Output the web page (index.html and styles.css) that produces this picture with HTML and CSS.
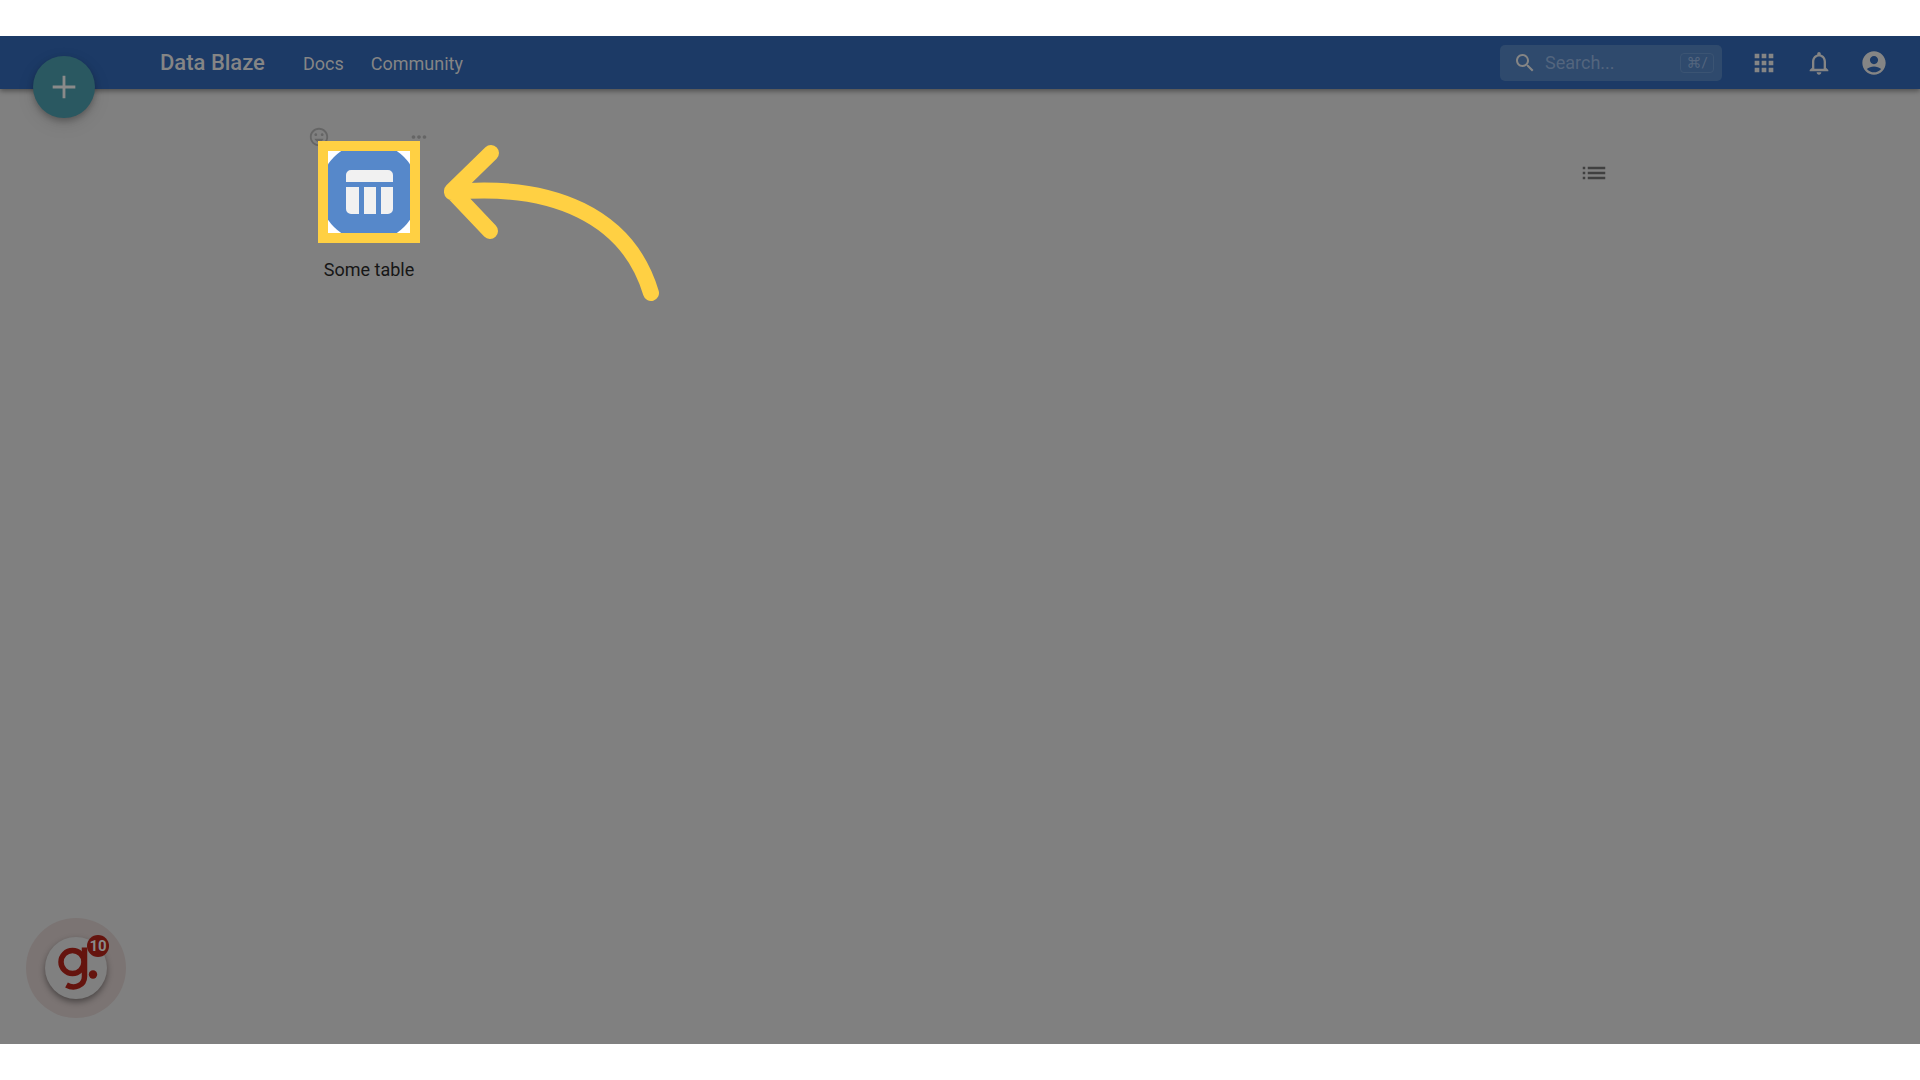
FILE: index.html
```
<!DOCTYPE html>
<html lang="en">
<head>
  <meta charset="UTF-8" />
  <meta name="viewport" content="width=device-width, initial-scale=1.0" />
  <title>Data Blaze</title>
  <link rel="stylesheet" href="styles.css">
</head>
<body>
  <div class="app">
    <header class="topbar">
      <a class="brand" href="#">Data Blaze</a>
      <nav class="nav">
        <a href="#">Docs</a>
        <a href="#">Community</a>
      </nav>
      <label class="search">
        <svg width="24" height="24" viewBox="0 0 24 24"><path d="M15.5 14h-.79l-.28-.27C15.41 12.59 16 11.11 16 9.5 16 5.91 13.09 3 9.5 3S3 5.91 3 9.5 5.91 16 9.5 16c1.61 0 3.09-.59 4.23-1.57l.27.28v.79l5 4.99L20.49 19l-4.99-5zm-6 0C7.01 14 5 11.99 5 9.5S7.01 5 9.5 5 14 7.01 14 9.5 11.99 14 9.5 14z"/></svg>
        <input type="text" placeholder="Search..." aria-label="Search" />
        <kbd>⌘/</kbd>
      </label>
      <div class="actions">
        <button aria-label="Apps">
          <svg viewBox="0 0 24 24"><path d="M4 8h4V4H4v4zm6 12h4v-4h-4v4zm-6 0h4v-4H4v4zm0-6h4v-4H4v4zm6 0h4v-4h-4v4zm6-10v4h4V4h-4zm-6 4h4V4h-4v4zm6 6h4v-4h-4v4zm0 6h4v-4h-4v4z"/></svg>
        </button>
        <button aria-label="Notifications">
          <svg viewBox="0 0 24 24"><path d="M12 22c1.1 0 2-.9 2-2h-4c0 1.1.9 2 2 2zm6-6v-5c0-3.07-1.63-5.64-4.5-6.32V4c0-.83-.67-1.5-1.5-1.5s-1.5.67-1.5 1.5v.68C7.64 5.36 6 7.92 6 11v5l-2 2v1h16v-1l-2-2zm-2 1H8v-6c0-2.48 1.51-4.5 4-4.5s4 2.02 4 4.5v6z"/></svg>
        </button>
        <button aria-label="Account">
          <svg viewBox="0 0 24 24"><path d="M12 2C6.48 2 2 6.48 2 12s4.48 10 10 10 10-4.48 10-10S17.52 2 12 2zm0 4c1.93 0 3.5 1.57 3.5 3.5S13.93 13 12 13s-3.5-1.57-3.5-3.5S10.07 6 12 6zm0 14c-2.03 0-4.43-.82-6.14-2.88C7.55 15.8 9.68 15 12 15s4.45.8 6.14 2.12C16.43 19.18 14.03 20 12 20z"/></svg>
        </button>
      </div>
    </header>

    <button class="fab" aria-label="Add">
      <svg width="34" height="34" viewBox="0 0 24 24"><path d="M20 13h-7v7h-2v-7H4v-2h7V4h2v7h7z"/></svg>
    </button>

    <main class="content">
      <div class="tile">
        <div class="tile-tools">
          <button aria-label="Pick icon">
            <svg viewBox="0 0 24 24"><path d="M11.99 2C6.47 2 2 6.48 2 12s4.47 10 9.99 10C17.52 22 22 17.52 22 12S17.52 2 11.99 2zM12 20c-4.42 0-8-3.58-8-8s3.58-8 8-8 8 3.58 8 8-3.58 8-8 8zm3.5-9c.83 0 1.5-.67 1.5-1.5S16.33 8 15.5 8 14 8.67 14 9.5s.67 1.5 1.5 1.5zm-7 0c.83 0 1.5-.67 1.5-1.5S9.33 8 8.5 8 7 8.67 7 9.5 7.67 11 8.5 11zM7 14c.8 2.05 2.7 3.5 5 3.5s4.2-1.45 5-3.5z"/></svg>
          </button>
          <button aria-label="More">
            <svg viewBox="0 0 24 24"><path d="M6 10c-1.1 0-2 .9-2 2s.9 2 2 2 2-.9 2-2-.9-2-2-2zm12 0c-1.1 0-2 .9-2 2s.9 2 2 2 2-.9 2-2-.9-2-2-2zm-6 0c-1.1 0-2 .9-2 2s.9 2 2 2 2-.9 2-2-.9-2-2-2z"/></svg>
          </button>
        </div>
        <a class="tile-link" href="#">
          <span class="highlight">
            <svg width="82" height="82" viewBox="0 0 82 82">
              <circle cx="41" cy="41" r="49.5" fill="#5688ca"/>
              <path fill="#f1f1f1" d="M18 31v-7a5 5 0 0 1 5-5h37a5 5 0 0 1 5 5v7zM18 36h13v27h-8a5 5 0 0 1-5-5zM36 36h12v27H36zM53 36h12v22a5 5 0 0 1-5 5h-7z"/>
            </svg>
          </span>
          <span class="tile-name">Some table</span>
        </a>
        <svg class="arrow" width="230" height="170" viewBox="0 0 230 170">
          <path d="M59 21 20 59l38 40M20 60c101-9 176 24 199 101"/>
        </svg>
      </div>
      <button class="view-toggle" aria-label="List view">
        <svg width="30" height="30" viewBox="0 0 24 24"><path d="M3 13h2v-2H3v2zm0 4h2v-2H3v2zm0-8h2V7H3v2zm4 4h14v-2H7v2zm0 4h14v-2H7v2zM7 7v2h14V7H7z"/></svg>
      </button>
    </main>

    <button class="guide" aria-label="Guides">
      <svg width="62" height="62" viewBox="0 0 62 62">
        <g fill="none" stroke="#65140e" stroke-width="5.5">
          <circle cx="27.5" cy="25" r="11.5"/>
          <path d="M39.5 10.5v29c0 9-10 13-18 8.5"/>
        </g>
        <circle cx="48" cy="37.5" r="4.2" fill="#65140e"/>
      </svg>
      <span class="badge">10</span>
    </button>
  </div>
</body>
</html>
```
FILE: styles.css
```
body {
  margin: 0;
  padding: 36px 0;
  background: #fff;
  font-family: Roboto, sans-serif;
  font-size: 18px;
}

button {
  padding: 0;
  border: none;
  background: none;
  color: inherit;
  font-family: inherit;
  cursor: pointer;
}

a {
  color: inherit;
  text-decoration: none;
}

svg {
  display: block;
  fill: currentColor;
}

.app {
  position: relative;
  min-height: calc(100vh - 72px);
  background: #808080;
  overflow: hidden;
}

.topbar {
  display: flex;
  align-items: center;
  height: 53px;
  padding: 0 32px 0 160px;
  background: #1c3a66;
  color: #858585;
  box-shadow: 0 2px 5px rgba(0, 0, 0, 0.4);
}

.brand {
  font-size: 22px;
  font-weight: 500;
}

.nav {
  display: flex;
  gap: 27px;
  margin-left: 38px;
  padding-top: 2px;
}

.search {
  display: flex;
  align-items: center;
  box-sizing: border-box;
  width: 222px;
  height: 36px;
  margin-left: auto;
  padding: 0 8px 0 13px;
  border-radius: 5px;
  background: #2f4a6d;
}

.search input {
  flex: 1;
  min-width: 0;
  margin-left: 8px;
  padding: 0;
  border: none;
  outline: none;
  background: none;
  color: #858585;
  font: inherit;
}

.search input::placeholder {
  color: #53657e;
  opacity: 1;
}

.search kbd {
  box-sizing: border-box;
  width: 34px;
  height: 20px;
  border: 1px solid #3b5473;
  border-radius: 4px;
  color: #53657e;
  font-family: Roboto, "DejaVu Sans", sans-serif;
  font-size: 15px;
  line-height: 18px;
  text-align: center;
}

.actions {
  display: flex;
  gap: 27px;
  margin-left: 28px;
}

.actions svg {
  width: 28px;
  height: 28px;
}

.fab {
  position: absolute;
  top: 20px;
  left: 33px;
  display: grid;
  place-items: center;
  width: 62px;
  height: 62px;
  border-radius: 50%;
  background: #2a5861;
  color: #8a8a8a;
  box-shadow: 0 3px 6px rgba(0, 0, 0, 0.25), 0 6px 18px rgba(0, 0, 0, 0.1);
}

.content {
  display: flex;
  justify-content: space-between;
  align-items: flex-start;
  max-width: 1304px;
  margin: 0 auto;
  padding: 37px 0;
}

.tile {
  position: relative;
  width: 122px;
}

.tile-tools {
  display: flex;
  justify-content: space-between;
  color: #656565;
}

.tile-tools svg {
  width: 22px;
  height: 22px;
}

.tile-link {
  display: flex;
  flex-direction: column;
  align-items: center;
  gap: 16px;
  margin-top: -7px;
  color: #161616;
}

.highlight {
  position: relative;
  border: 10px solid #ffd043;
  background: #fff;
}

.tile-name {
  line-height: 22px;
}

.arrow {
  position: absolute;
  top: 6px;
  left: 124px;
  fill: none;
  stroke: #ffd043;
  stroke-width: 16;
  stroke-linecap: round;
  stroke-linejoin: round;
}

.view-toggle {
  margin: 32px 3px 0 0;
  color: #404040;
}

.guide {
  position: absolute;
  bottom: 45px;
  left: 45px;
  width: 62px;
  height: 62px;
  border-radius: 50%;
  background: #808080;
  box-shadow: 0 3px 6px rgba(0, 0, 0, 0.4), 0 0 0 19px #7b7473;
}

.badge {
  position: absolute;
  top: -2px;
  right: -2px;
  width: 22px;
  height: 22px;
  border-radius: 50%;
  background: #65140e;
  color: #8a8a8a;
  font-size: 15px;
  font-weight: 700;
  line-height: 22px;
}
```
